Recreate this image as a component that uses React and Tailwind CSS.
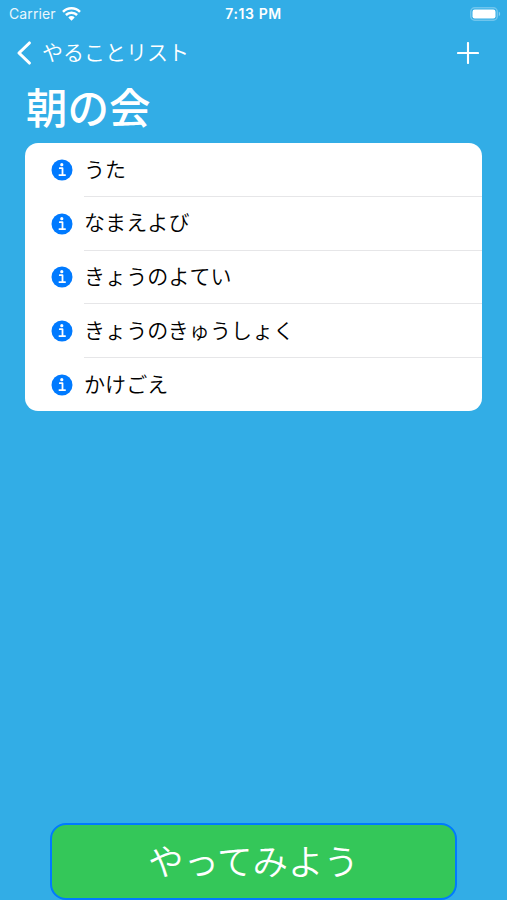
import React from 'react';

const items = ['うた', 'なまえよび', 'きょうのよてい', 'きょうのきゅうしょく', 'かけごえ'];

const InfoIcon = () => (
  <svg width="22" height="22" viewBox="0 0 22 22">
    <circle cx="11" cy="11" r="10.5" fill="#007aff" />
    <circle cx="10.8" cy="5.7" r="1.6" fill="#fff" />
    <path d="M8.8 9.2H11.5V15.8M8.4 16.1H14.1" fill="none" stroke="#fff" strokeWidth="1.8" strokeLinecap="round" strokeLinejoin="round" />
  </svg>
);

const WifiIcon = () => (
  <svg width="19" height="14" viewBox="0 0 19 14">
    <path d="M1 4.8A12 12 0 0 1 18 4.8M3.9 8A7.9 7.9 0 0 1 15.1 8" fill="none" stroke="#fff" strokeWidth="2.5" />
    <path d="M9.5 13.7L6.3 10.4A4.6 4.6 0 0 1 12.7 10.4Z" fill="#fff" />
  </svg>
);

const BatteryIcon = () => (
  <svg width="31" height="14" viewBox="0 0 31 14">
    <rect x="0.75" y="0.75" width="26.5" height="12.5" rx="4" fill="none" stroke="#fff" strokeWidth="1.5" strokeOpacity="0.3" />
    <rect x="2.5" y="2.5" width="23" height="9" rx="2.2" fill="#fff" />
    <path d="M28.8 4.8C30.6 5.4 30.6 8.6 28.8 9.2Z" fill="#fff" fillOpacity="0.4" />
  </svg>
);

const App = () => {
  return (
    <div className="flex flex-col h-screen overflow-hidden bg-[#32ade6] text-white font-['Inter','Noto_Sans_CJK_JP',sans-serif]">
      <div className="grid grid-cols-3 items-center h-[27px] pl-[9px] pr-[6px] text-sm">
        <div className="flex items-center gap-1.5">
          <span className="tracking-[0.1px] opacity-90">Carrier</span>
          <WifiIcon />
        </div>
        <span className="pr-[3px] text-center font-semibold tracking-[0.6px]">7:13 PM</span>
        <div className="flex justify-end">
          <BatteryIcon />
        </div>
      </div>

      <div className="flex items-center justify-between h-[51px] pl-4 pr-7">
        <button className="flex items-center gap-2.5 text-[21px] font-[350]">
          <svg width="16" height="26" viewBox="0 0 16 26">
            <path d="M13.4 3L3 13L13.4 23" fill="none" stroke="#fff" strokeWidth="3.1" strokeLinecap="round" strokeLinejoin="round" />
          </svg>
          <span>やることリスト</span>
        </button>
        <svg width="22" height="22" viewBox="0 0 22 22">
          <path d="M11 1V21M1 11H21" stroke="#fff" strokeWidth="2.1" strokeLinecap="round" />
        </svg>
      </div>

      <h1 className="h-[65px] pt-px pl-[26px] text-[41.5px] leading-[60px] font-medium">朝の会</h1>

      <ul className="mx-[25px] h-[268px] rounded-[13px] bg-white text-black overflow-hidden">
        {items.map((item, index) => (
          <li key={item} className="flex items-center h-[53.75px] pl-[26px]">
            <InfoIcon />
            <div className={`ml-[11px] flex flex-1 items-center h-full text-[21px] font-[350] tracking-[0.1px] ${index < items.length - 1 ? 'border-b border-[#e6e6e8]' : ''}`}>
              {item}
            </div>
          </li>
        ))}
      </ul>

      <button className="mt-auto mx-[50px] h-[77px] shrink-0 rounded-[16px] border-2 border-[#007aff] bg-[#34c759] pt-0.5 text-[35.5px] font-[350]">
        やってみよう
      </button>
    </div>
  );
};

export default App;
